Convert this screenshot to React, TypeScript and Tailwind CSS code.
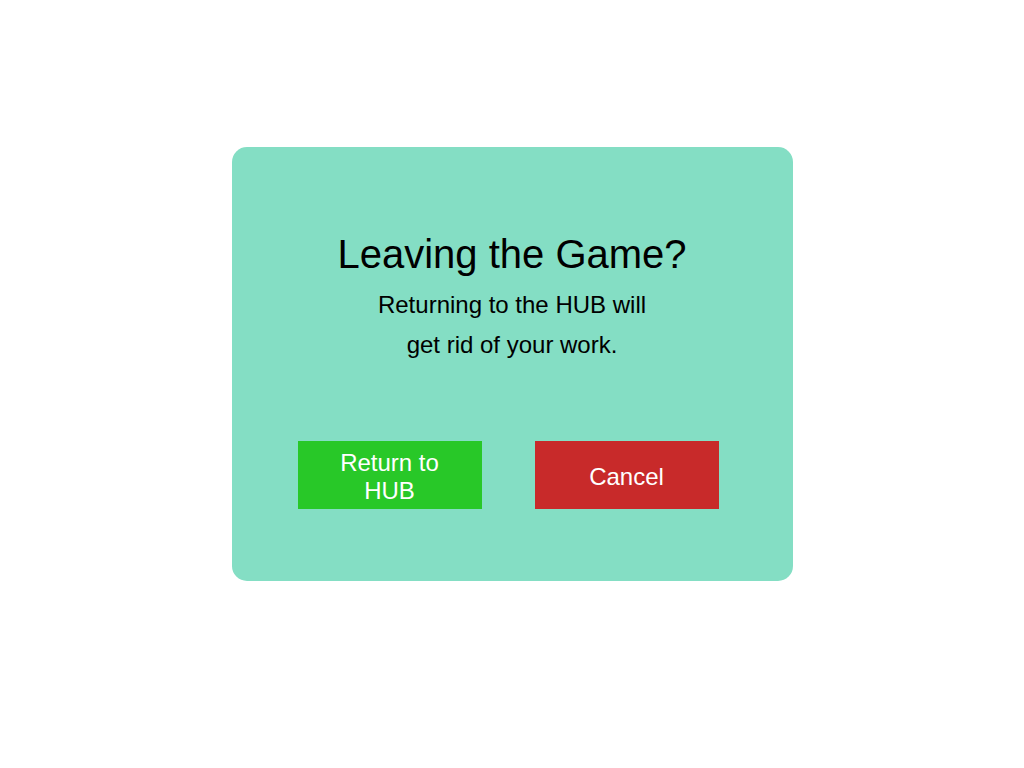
const App = () => {
  return (
    <main className="min-h-screen bg-white flex justify-center items-start px-4 pt-[147px] font-['Liberation_Sans',Arial,sans-serif]">
      <Dialog/>
    </main>
  );
}

export default App;


const Dialog = () => {
  return (
    <div role="dialog" aria-labelledby="LEAVE_TITLE" aria-describedby="LEAVE_TEXT" className="w-full max-w-[561px] bg-[#84dec4] rounded-[15px] px-16 pt-[79px] pb-[72px] text-black text-center">
      <h1 id="LEAVE_TITLE" className="text-[40px] leading-[56px]">Leaving the Game?</h1>
      <p id="LEAVE_TEXT" className="text-2xl leading-10 mt-[3px]">
        Returning to the HUB will<br/>get rid of your work.
      </p>

      <Actions/>
    </div>
  )
}

const Actions = () => {
  return (
    <div className="flex justify-center gap-[53px] mt-[76px] pr-2 text-2xl leading-7 text-white">
      <button type="button" className="w-[184px] h-[68px] px-8 pt-1 bg-[#28c828]">Return to HUB</button>
      <button type="button" className="w-[184px] h-[68px] px-8 pt-1 bg-[#c82a2a]">Cancel</button>
    </div>
  )
}
